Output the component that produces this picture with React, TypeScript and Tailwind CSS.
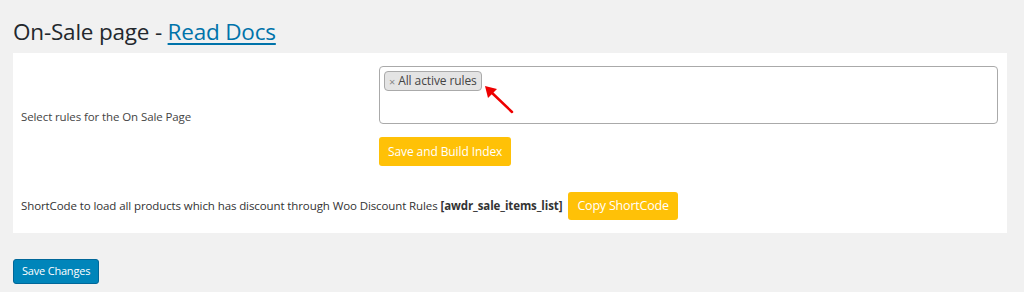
import React from "react";

const font = { fontFamily: '"Open Sans", "Noto Sans", sans-serif' };

const App = () => {
  return (
    <div className="min-h-[292px] w-[1024px] bg-[#f1f1f1] px-[13px] pt-[17px] pb-2" style={font}>
      <h1 className="text-[22.5px] leading-[30px] text-[#23282d] tracking-[-0.2px]">
        On-Sale page -{" "}
        <a href="#" className="text-[#0073aa] underline font-medium underline-offset-[3px]">
          Read Docs
        </a>
      </h1>

      <div className="mt-[6px] w-[994px] bg-white pt-[13px] pb-[13px] pl-2 pr-[9px]">
        <div className="flex">
          <div className="w-[358px] pt-[42px] text-[11.5px] tracking-[-0.1px] text-[#444]">Select rules for the On Sale Page</div>
          <div className="flex flex-1 flex-col items-start">
            <div className="relative flex h-[58px] w-full items-start rounded-[4px] border border-[#aaa] pl-[4px] pt-[4px]">
              <span className="flex h-[20px] items-center rounded-[4px] border border-[#aaa] bg-[#e4e4e4] px-[4px] text-[12px] leading-none tracking-[-0.1px] text-[#444]">
                <span className="mr-[3px] text-[#888] text-[11px]">×</span>All active rules
              </span>
              <svg className="absolute left-[103px] top-[17px]" width="32" height="30" viewBox="0 0 32 30">
                <line x1="29" y1="28" x2="7" y2="7" stroke="#e00" strokeWidth="2.5" strokeLinecap="round" />
                <polygon points="2,2 14,5 5,14" fill="#e00" />
              </svg>
            </div>
            <button className="mt-[13px] h-[29px] rounded-[3px] bg-[#ffc107] px-[9px] text-[12px] tracking-[-0.1px] text-white">
              Save and Build Index
            </button>
          </div>
        </div>
        <div className="mt-[26px] flex items-center text-[11.5px] tracking-[-0.1px] text-[#333]">
          <span>
            ShortCode to load all products which has discount through Woo Discount Rules{" "}
            <b className="font-bold">[awdr_sale_items_list]</b>
          </span>
          <button className="ml-[6px] h-[28px] rounded-[3px] bg-[#ffc107] px-[9px] text-[12.5px] tracking-[-0.2px] text-white">
            Copy ShortCode
          </button>
        </div>
      </div>

      <button className="mt-[26px] h-[25px] rounded-[3px] border border-[#006799] bg-[#0085ba] px-[8px] text-[11px] tracking-[-0.2px] text-white">
        Save Changes
      </button>
    </div>
  );
};

export default App;
